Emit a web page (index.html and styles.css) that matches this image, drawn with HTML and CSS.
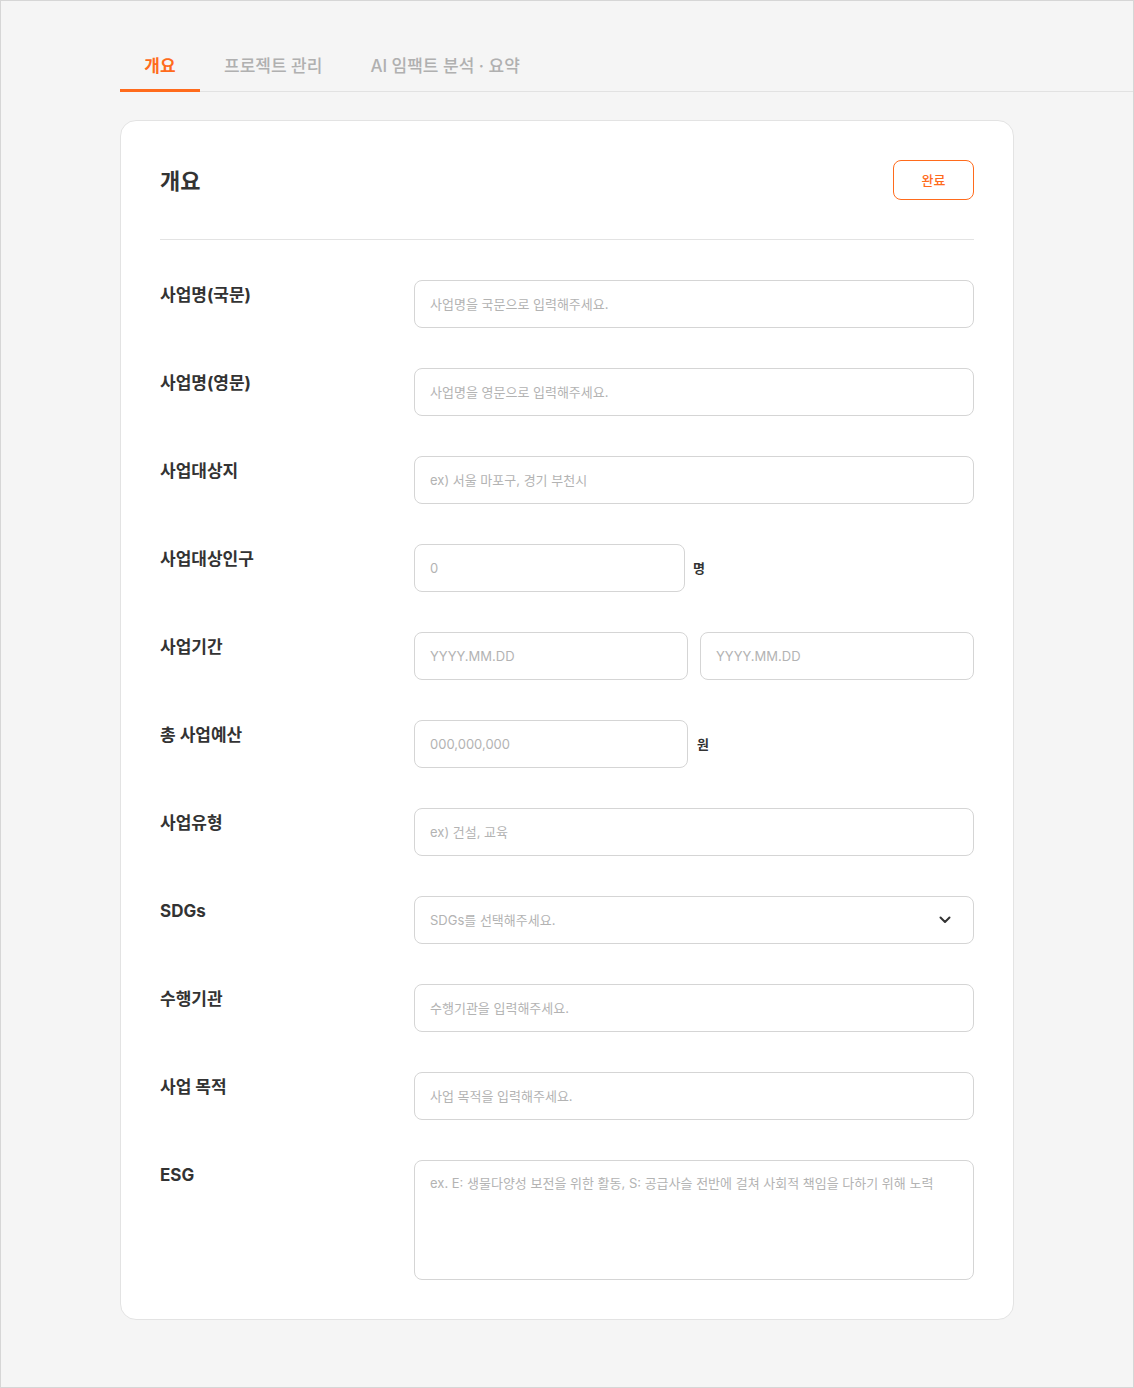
FILE: index.html
```html
<!DOCTYPE html>
<html lang="ko">
<head>
<meta charset="utf-8">
<title>개요</title>
<link rel="stylesheet" href="styles.css">
</head>
<body>
<div class="page">
  <nav class="tabs">
    <a class="tab active">개요</a>
    <a class="tab">프로젝트 관리</a>
    <a class="tab">AI 임팩트 분석 · 요약</a>
  </nav>
  <section class="card">
    <header class="card-head">
      <h1 class="card-title">개요</h1>
      <button class="btn-done">완료</button>
    </header>
    <div class="form">
      <div class="row">
        <label class="label">사업명(국문)</label>
        <div class="field"><div class="input">사업명을 국문으로 입력해주세요.</div></div>
      </div>
      <div class="row">
        <label class="label">사업명(영문)</label>
        <div class="field"><div class="input">사업명을 영문으로 입력해주세요.</div></div>
      </div>
      <div class="row">
        <label class="label">사업대상지</label>
        <div class="field"><div class="input">ex) 서울 마포구, 경기 부천시</div></div>
      </div>
      <div class="row">
        <label class="label">사업대상인구</label>
        <div class="field">
          <div class="input w-pop">0</div><span class="unit unit-pop">명</span>
        </div>
      </div>
      <div class="row">
        <label class="label">사업기간</label>
        <div class="field dates">
          <div class="input">YYYY.MM.DD</div>
          <div class="input">YYYY.MM.DD</div>
        </div>
      </div>
      <div class="row">
        <label class="label">총 사업예산</label>
        <div class="field">
          <div class="input w-half">000,000,000</div><span class="unit">원</span>
        </div>
      </div>
      <div class="row">
        <label class="label">사업유형</label>
        <div class="field"><div class="input">ex) 건설, 교육</div></div>
      </div>
      <div class="row">
        <label class="label">SDGs</label>
        <div class="field">
          <div class="input select">
            <span>SDGs를 선택해주세요.</span>
            <svg class="chev" width="12" height="8" viewBox="0 0 12 8"><path d="M1.5 1.5 L6 6 L10.5 1.5" fill="none" stroke="#333" stroke-width="2" stroke-linecap="round" stroke-linejoin="round"/></svg>
          </div>
        </div>
      </div>
      <div class="row">
        <label class="label">수행기관</label>
        <div class="field"><div class="input">수행기관을 입력해주세요.</div></div>
      </div>
      <div class="row">
        <label class="label">사업 목적</label>
        <div class="field"><div class="input">사업 목적을 입력해주세요.</div></div>
      </div>
      <div class="row">
        <label class="label">ESG</label>
        <div class="field"><div class="input textarea">ex. E: 생물다양성 보전을 위한 활동, S: 공급사슬 전반에 걸쳐 사회적 책임을 다하기 위해 노력</div></div>
      </div>
    </div>
  </section>
</div>
</body>
</html>
```
FILE: styles.css
```css
* { box-sizing: border-box; }
html, body { margin: 0; padding: 0; }
body {
  font-family: "Inter", "Noto Sans CJK KR", "Noto Sans", sans-serif;
  background: #f5f5f5;
  color: #333;
}
.page {
  width: 1134px;
  height: 1388px;
  border: 1px solid #d6d6d6;
  background: #f5f5f5;
  padding-top: 40px;
  overflow: hidden;
}
.tabs {
  display: flex;
  margin-left: 119px;
  border-bottom: 1px solid #e2e2e2;
  height: 51px;
}
.tab {
  padding: 0 24px;
  font-size: 17px;
  font-weight: 500;
  color: #b0b0b0;
  line-height: 50px;
  height: 51px;
  border-bottom: 3px solid transparent;
  margin-bottom: -1px;
  text-align: center;
}
.tab.active {
  min-width: 80px;
  color: #ff6b1c;
  font-weight: 700;
  border-bottom-color: #ff6b1c;
}
.card {
  margin: 28px 0 0 119px;
  width: 894px;
  background: #fff;
  border: 1px solid #e3e3e3;
  border-radius: 16px;
  padding: 39px;
}
.card-head {
  display: flex;
  justify-content: space-between;
  align-items: center;
  height: 40px;
  box-sizing: content-box;
  border-bottom: 1px solid #e3e3e3;
  padding-bottom: 39px;
}
.card-title {
  margin: 0 0 3px;
  font-size: 22px;
  font-weight: 700;
  color: #333;
}
.btn-done {
  width: 81px;
  height: 40px;
  border: 1px solid #ff6b1c;
  border-radius: 8px;
  background: #fff;
  color: #ff6b1c;
  font-family: inherit;
  font-size: 13px;
  font-weight: 500;
  padding: 0 0 1px;
}
.form {
  display: flex;
  flex-direction: column;
  gap: 40px;
  padding-top: 40px;
}
.row {
  display: flex;
  align-items: flex-start;
}
.label {
  width: 254px;
  flex: none;
  font-size: 17px;
  font-weight: 700;
  color: #333;
  padding-top: 3px;
  line-height: 24px;
}
.field {
  flex: 1;
  display: flex;
  align-items: center;
}
.input {
  flex: 1;
  height: 48px;
  border: 1px solid #d5d5d5;
  border-radius: 8px;
  padding: 0 15px;
  font-size: 13px;
  color: #b3b3b3;
  line-height: 46px;
  white-space: nowrap;
}
.w-pop { flex: none; width: 271px; }
.w-half { flex: none; width: 274px; }
.unit {
  margin-left: 9px;
  margin-bottom: 2px;
  font-size: 13px;
  font-weight: 700;
  color: #333;
}
.unit-pop { margin-left: 8px; }
.dates { gap: 12px; }
.select {
  display: flex;
  justify-content: space-between;
  align-items: center;
  padding-right: 22px;
}
.chev { flex: none; }
.textarea {
  height: 120px;
  line-height: 20px;
  padding-top: 12px;
}
```
